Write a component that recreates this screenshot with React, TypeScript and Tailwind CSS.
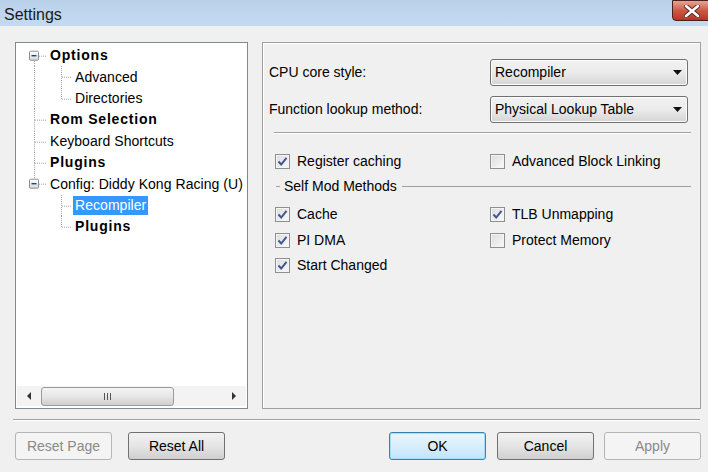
import React from 'react';

type Node = {
  label: string;
  bold?: boolean;
  level: 0 | 1;
  box?: boolean; // expand box
  first?: boolean; // first root row
  lastRoot?: boolean; // last root sibling
  lastChild?: boolean; // last of its siblings (level 1)
  parentLast?: boolean; // parent root is the last one
  selected?: boolean;
};

const nodes: Node[] = [
  { label: 'Options', bold: true, level: 0, box: true, first: true },
  { label: 'Advanced', level: 1 },
  { label: 'Directories', level: 1, lastChild: true },
  { label: 'Rom Selection', bold: true, level: 0 },
  { label: 'Keyboard Shortcuts', level: 0 },
  { label: 'Plugins', bold: true, level: 0 },
  { label: 'Config: Diddy Kong Racing (U)', level: 0, box: true, lastRoot: true },
  { label: 'Recompiler', level: 1, parentLast: true, selected: true },
  { label: 'Plugins', bold: true, level: 1, parentLast: true, lastChild: true },
];

const DOT = '#a5a5a5';

function ExpandBox() {
  return (
    <g>
      <rect x="13.5" y="6.2" width="9" height="9" fill="url(#boxg)" stroke="#8f8f8f" rx="1" />
      <line x1="15.5" y1="10.7" x2="20.5" y2="10.7" stroke="#2b3f73" strokeWidth="1.4" />
    </g>
  );
}

// gutter for root level, width 32, line x = 18 (abs 33)
function RootGutter({ n }: { n: Node }) {
  const cx = 18;
  const cy = 10.7;
  return (
    <svg width="32" height="21.4" className="block shrink-0">
      <defs>
        <linearGradient id="boxg" x1="0" y1="0" x2="0" y2="1">
          <stop offset="0" stopColor="#ffffff" />
          <stop offset="1" stopColor="#d6d9dd" />
        </linearGradient>
      </defs>
      {n.level === 0 ? (
        <>
          {!n.first && (
            <line x1={cx + 0.5} y1="0" x2={cx + 0.5} y2={n.box ? 6 : cy} stroke={DOT} strokeDasharray="1 1" />
          )}
          {!n.lastRoot && (
            <line x1={cx + 0.5} y1={n.box ? 16 : cy} x2={cx + 0.5} y2="21.4" stroke={DOT} strokeDasharray="1 1" />
          )}
          <line x1={n.box ? 23 : cx + 1} y1={cy + 0.5} x2="31" y2={cy + 0.5} stroke={DOT} strokeDasharray="1 1" />
          {n.box && <ExpandBox />}
        </>
      ) : (
        !n.parentLast && (
          <line x1={cx + 0.5} y1="0" x2={cx + 0.5} y2="21.4" stroke={DOT} strokeDasharray="1 1" />
        )
      )}
    </svg>
  );
}

function ChildGutter({ n }: { n: Node }) {
  const cx = 13;
  const cy = 10.7;
  return (
    <svg width="25" height="21.4" className="block shrink-0">
      <line x1={cx + 0.5} y1="0" x2={cx + 0.5} y2={n.lastChild ? cy : 21.4} stroke={DOT} strokeDasharray="1 1" />
      <line x1={cx + 1} y1={cy + 0.5} x2="24" y2={cy + 0.5} stroke={DOT} strokeDasharray="1 1" />
    </svg>
  );
}

function TreeView() {
  return (
    <div className="w-[233px] h-[367px] bg-white border border-[#828790] flex flex-col">
      <div className="flex-1 pt-[2px]">
        {nodes.map((n, i) => (
          <div key={i} className="flex items-center h-[21.4px]">
            <RootGutter n={n} />
            {n.level === 1 && <ChildGutter n={n} />}
            <span
              className={`px-[2px] leading-[19px] whitespace-nowrap text-[14px] ${
                n.bold ? 'font-bold tracking-[0.8px]' : 'tracking-[0.05px]'
              } ${n.selected ? 'bg-[#3399ff] text-white' : 'text-black'}`}
            >
              {n.label}
            </span>
          </div>
        ))}
      </div>
      <div className="h-[20px] mb-[2px] mx-[1px] flex items-center bg-[#f3f3f3]">
        <div className="w-[24px] flex justify-center">
          <svg width="5" height="8"><polygon points="4,0 4,8 0,4" fill="#333" /></svg>
        </div>
        <div className="w-[133px] h-[19px] rounded-[3px] border border-[#9a9a9a] bg-gradient-to-b from-[#f4f4f4] via-[#e6e6e6] to-[#cfcfcf] flex items-center justify-center">
          <div className="flex gap-[2px]">
            <div className="w-px h-[7px] bg-[#555]" />
            <div className="w-px h-[7px] bg-[#555]" />
            <div className="w-px h-[7px] bg-[#555]" />
          </div>
        </div>
        <div className="flex-1" />
        <div className="w-[24px] flex justify-center">
          <svg width="5" height="8"><polygon points="0,0 0,8 4,4" fill="#333" /></svg>
        </div>
      </div>
    </div>
  );
}

function Combo({ value }: { value: string }) {
  return (
    <div className="h-[27px] w-[198px] rounded-[3px] border border-[#707070] bg-gradient-to-b from-[#f2f2f2] via-[#ebebeb] to-[#d5d5d5] flex items-center pl-[4px] pr-[5px] shadow-[inset_0_0_0_1px_#fcfcfc]">
      <span className="flex-1 text-[14px] text-black">{value}</span>
      <svg width="9" height="5"><polygon points="0,0 9,0 4.5,5" fill="#111" /></svg>
    </div>
  );
}

function Check({ label, checked }: { label: string; checked?: boolean }) {
  return (
    <div className="flex items-center gap-[7px] h-[25.5px]">
      <div className="w-[15px] h-[15px] border border-[#8e8f8f] bg-gradient-to-br from-[#dcdcdc] to-[#fafafa] flex items-center justify-center shadow-[inset_0_0_0_1px_#f4f4f4]">
        {checked && (
          <svg width="11" height="11" viewBox="0 0 11 11">
            <path d="M1.5 5.5 L4.2 8.5 L9.5 1.8" fill="none" stroke="#41568f" strokeWidth="2" />
          </svg>
        )}
      </div>
      <span className="text-[14px] text-black whitespace-nowrap">{label}</span>
    </div>
  );
}

function WinButton({ label, disabled, isDefault }: { label: string; disabled?: boolean; isDefault?: boolean }) {
  let cls = 'border-[#707070] bg-gradient-to-b from-[#f2f2f2] via-[#e5e5e5] to-[#cfcfcf] text-black';
  if (disabled) cls = 'border-[#b5b5b5] bg-[#f4f4f4] text-[#8a8a8a]';
  if (isDefault)
    cls = 'border-[#3c7fb1] bg-gradient-to-b from-[#eaf6fd] via-[#d9eefb] to-[#bee6fd] text-black shadow-[inset_0_0_0_1px_#a6dcf8]';
  return (
    <button className={`w-[97px] h-[28px] rounded-[3px] border text-[14px] flex items-center justify-center ${cls}`}>
      {label}
    </button>
  );
}

export default function App() {
  return (
    <div className="w-[708px] h-[472px] overflow-hidden bg-[#f0f0f0] flex flex-col font-['Liberation_Sans',Arial,sans-serif]">
      {/* title bar */}
      <div className="h-[26px] flex items-start bg-gradient-to-b from-[#b9d1ea] to-[#c4daf1]">
        <span className="pl-[4px] pt-[3px] text-[16px] text-[#1a1a1a] flex-1">Settings</span>
        <div className="w-[40px] h-[21px] -mr-[4px] rounded-bl-[4px] border border-[#4b1f1f] bg-gradient-to-b from-[#e5a593] via-[#cc5a43] to-[#b8341f] flex items-center justify-center">
          <svg width="16" height="12" viewBox="0 0 16 12">
            <path d="M2 1 L14 11 M14 1 L2 11" stroke="#5a2a24" strokeWidth="4.5" strokeLinecap="round" />
            <path d="M2 1 L14 11 M14 1 L2 11" stroke="#ffffff" strokeWidth="2.6" strokeLinecap="round" />
          </svg>
        </div>
      </div>

      {/* content */}
      <div className="flex pt-[16px] pl-[15px] gap-[14px]">
        <TreeView />
        <div className="w-[439px] h-[367px] border border-[#a0a0a0] shadow-[inset_1px_1px_0_#ffffff] pl-[6px] pt-[16px]">
          <div className="grid grid-cols-[221px_198px] gap-y-[10px] items-center">
            <span className="text-[14px] text-black">CPU core style:</span>
            <Combo value="Recompiler" />
            <span className="text-[14px] text-black">Function lookup method:</span>
            <Combo value="Physical Lookup Table" />
          </div>
          <div className="mt-[9px] ml-[5px] w-[417px] h-px bg-[#a0a0a0] shadow-[0_1px_0_#ffffff]" />
          <div className="mt-[16px] ml-[6px] grid grid-cols-[215px_1fr] h-[20px] items-center">
            <Check label="Register caching" checked />
            <Check label="Advanced Block Linking" />
          </div>
          <div className="mt-[7px] ml-[7px] mr-[9px] flex items-center h-[20px] gap-[4px]">
            <div className="w-[4px] h-px bg-[#a0a0a0]" />
            <span className="text-[14px] text-black whitespace-nowrap">Self Mod Methods</span>
            <div className="flex-1 h-px bg-[#a0a0a0] ml-[1px]" />
          </div>
          <div className="mt-[6px] ml-[6px] grid grid-cols-[215px_1fr]">
            <Check label="Cache" checked />
            <Check label="TLB Unmapping" checked />
            <Check label="PI DMA" checked />
            <Check label="Protect Memory" />
            <Check label="Start Changed" checked />
          </div>
        </div>
      </div>

      <div className="mt-[10px] ml-[13px] mr-[8px] h-px bg-[#a0a0a0] shadow-[0_1px_0_#ffffff]" />

      <div className="mt-[12px] pl-[15px] pr-[7px] flex items-center">
        <WinButton label="Reset Page" disabled />
        <div className="w-[16px]" />
        <WinButton label="Reset All" />
        <div className="flex-1" />
        <WinButton label="OK" isDefault />
        <div className="w-[11px]" />
        <WinButton label="Cancel" />
        <div className="w-[10px]" />
        <WinButton label="Apply" disabled />
      </div>
    </div>
  );
}
